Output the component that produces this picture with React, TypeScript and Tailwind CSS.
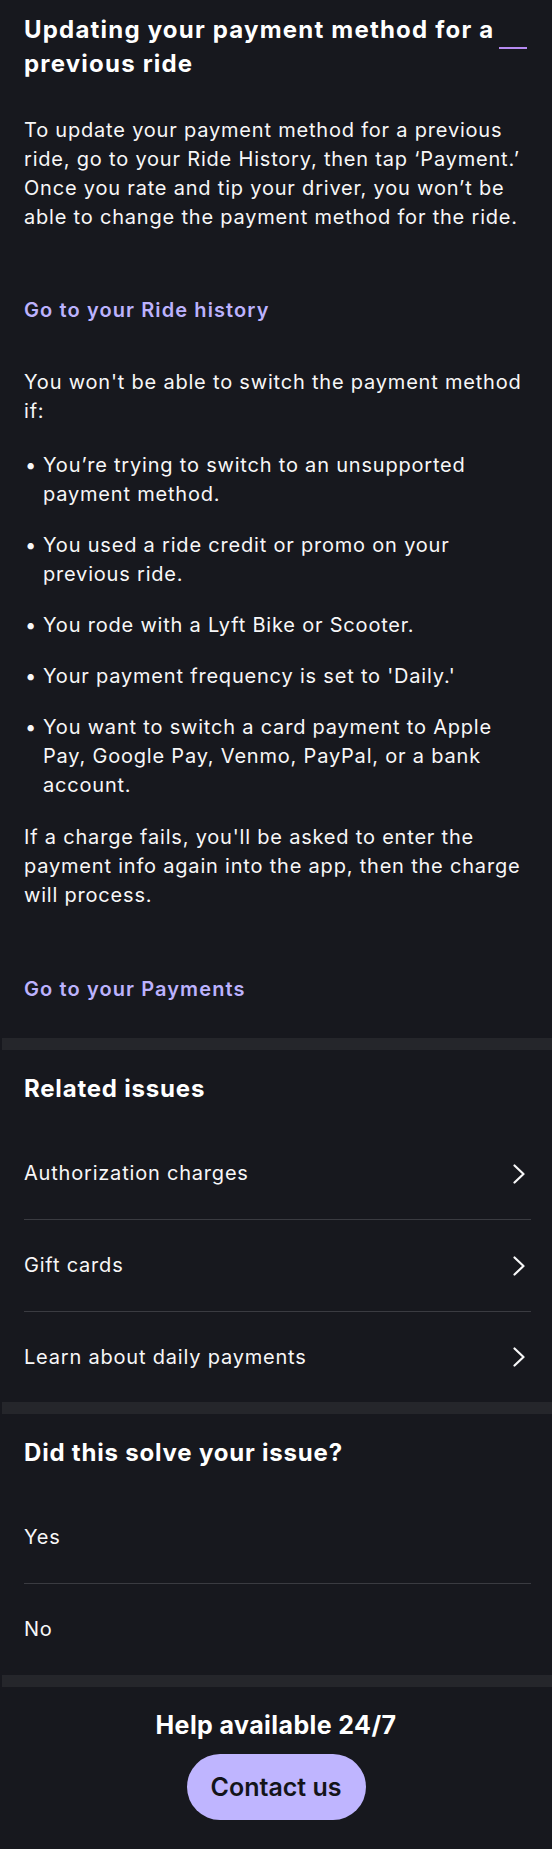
const relatedIssues = ['Authorization charges', 'Gift cards', 'Learn about daily payments'];

const intro = [
  'To update your payment method for a previous',
  'ride, go to your Ride History, then tap ‘Payment.’',
  'Once you rate and tip your driver, you won’t be',
  'able to change the payment method for the ride.',
];

const reasons = [
  ['You’re trying to switch to an unsupported', 'payment method.'],
  ['You used a ride credit or promo on your', 'previous ride.'],
  ['You rode with a Lyft Bike or Scooter.'],
  ["Your payment frequency is set to 'Daily.'"],
  ['You want to switch a card payment to Apple', 'Pay, Google Pay, Venmo, PayPal, or a bank', 'account.'],
];

const chargeFails = [
  "If a charge fails, you'll be asked to enter the",
  'payment info again into the app, then the charge',
  'will process.',
];

function Lines({ lines }: { lines: string[] }) {
  return (
    <>
      {lines.map((line) => (
        <span className="block whitespace-nowrap" key={line}>
          {line}
        </span>
      ))}
    </>
  );
}

function Chevron() {
  return (
    <svg width="12" height="20" viewBox="0 0 12 20" fill="none">
      <path
        d="M1.5 1.5 10.5 10l-9 8.5"
        stroke="currentColor"
        strokeLinecap="round"
        strokeLinejoin="round"
        strokeWidth="2.2"
      />
    </svg>
  );
}

function Band() {
  return <div className="ml-[2px] h-[12px] bg-[#25262b]" />;
}

export default function App() {
  return (
    <div className="min-h-screen bg-[#17181e] font-['Inter','Noto_Sans',sans-serif] text-[20px] leading-[29px] tracking-[0.8px] text-[#f7f7f8]">
      <section className="pl-6 pr-[21px] pt-[13px] pb-[34px]">
        <div className="relative">
          <h1 className="text-[24px] font-bold leading-[34px] tracking-[1.2px] text-white">
            Updating your payment method for a previous ride
          </h1>
          {/* focus marker sitting at the end of the first title line */}
          <span className="absolute top-[34px] right-[4px] h-[2px] w-[28px] bg-[#b68af2]" />
        </div>
        <p className="mt-[35px]">
          <Lines lines={intro} />
        </p>
        <a className="mt-[64px] block font-semibold tracking-[1.1px] text-[#bcb2fd]" href="#">
          Go to your Ride history
        </a>
        <p className="mt-[43px]">
          <Lines lines={["You won't be able to switch the payment method", 'if:']} />
        </p>
        <ul className="mt-[25px] flex flex-col gap-[22px]">
          {reasons.map((reason) => (
            <li className="flex" key={reason[0]}>
              <span className="w-[19px] shrink-0 pl-[1px]">•</span>
              <span>
                <Lines lines={reason} />
              </span>
            </li>
          ))}
        </ul>
        <p className="mt-[23px]">
          <Lines lines={chargeFails} />
        </p>
        <a className="mt-[65px] block font-semibold tracking-[1.1px] text-[#bcb2fd]" href="#">
          Go to your Payments
        </a>
      </section>

      <Band />

      <section className="pl-6 pr-[21px] pt-[22px]">
        <h2 className="text-[24px] font-bold leading-[34px] tracking-[0.8px] text-white">Related issues</h2>
        <ul className="mt-[22px]">
          {relatedIssues.map((issue, i) => (
            <li
              className={
                i < relatedIssues.length - 1
                  ? 'flex h-[92px] items-center justify-between border-b border-[#3a3b41]'
                  : 'flex h-[90px] items-center justify-between'
              }
              key={issue}
            >
              <span>{issue}</span>
              <span className="pr-[6px]">
                <Chevron />
              </span>
            </li>
          ))}
        </ul>
      </section>

      <Band />

      <section className="pl-6 pr-[21px] pt-[22px]">
        <h2 className="text-[24px] font-bold leading-[34px] tracking-[0.8px] text-white">Did this solve your issue?</h2>
        <div className="mt-[22px]">
          <button
            className="flex h-[92px] w-full items-center border-b border-[#3a3b41] text-left tracking-[0.8px]"
            type="button"
          >
            Yes
          </button>
          <button className="flex h-[91px] w-full items-center text-left tracking-[0.8px]" type="button">
            No
          </button>
        </div>
      </section>

      <Band />

      <footer className="flex flex-col items-center pt-[21px] pb-[30px]">
        <h3 className="text-[25px] font-bold leading-[34px] tracking-[0.4px] text-white">Help available 24/7</h3>
        <button
          className="mt-[12px] h-[66px] w-[179px] rounded-full bg-[#bfb5ff] text-[25px] font-semibold tracking-normal text-[#141419]"
          type="button"
        >
          Contact us
        </button>
      </footer>
    </div>
  );
}
